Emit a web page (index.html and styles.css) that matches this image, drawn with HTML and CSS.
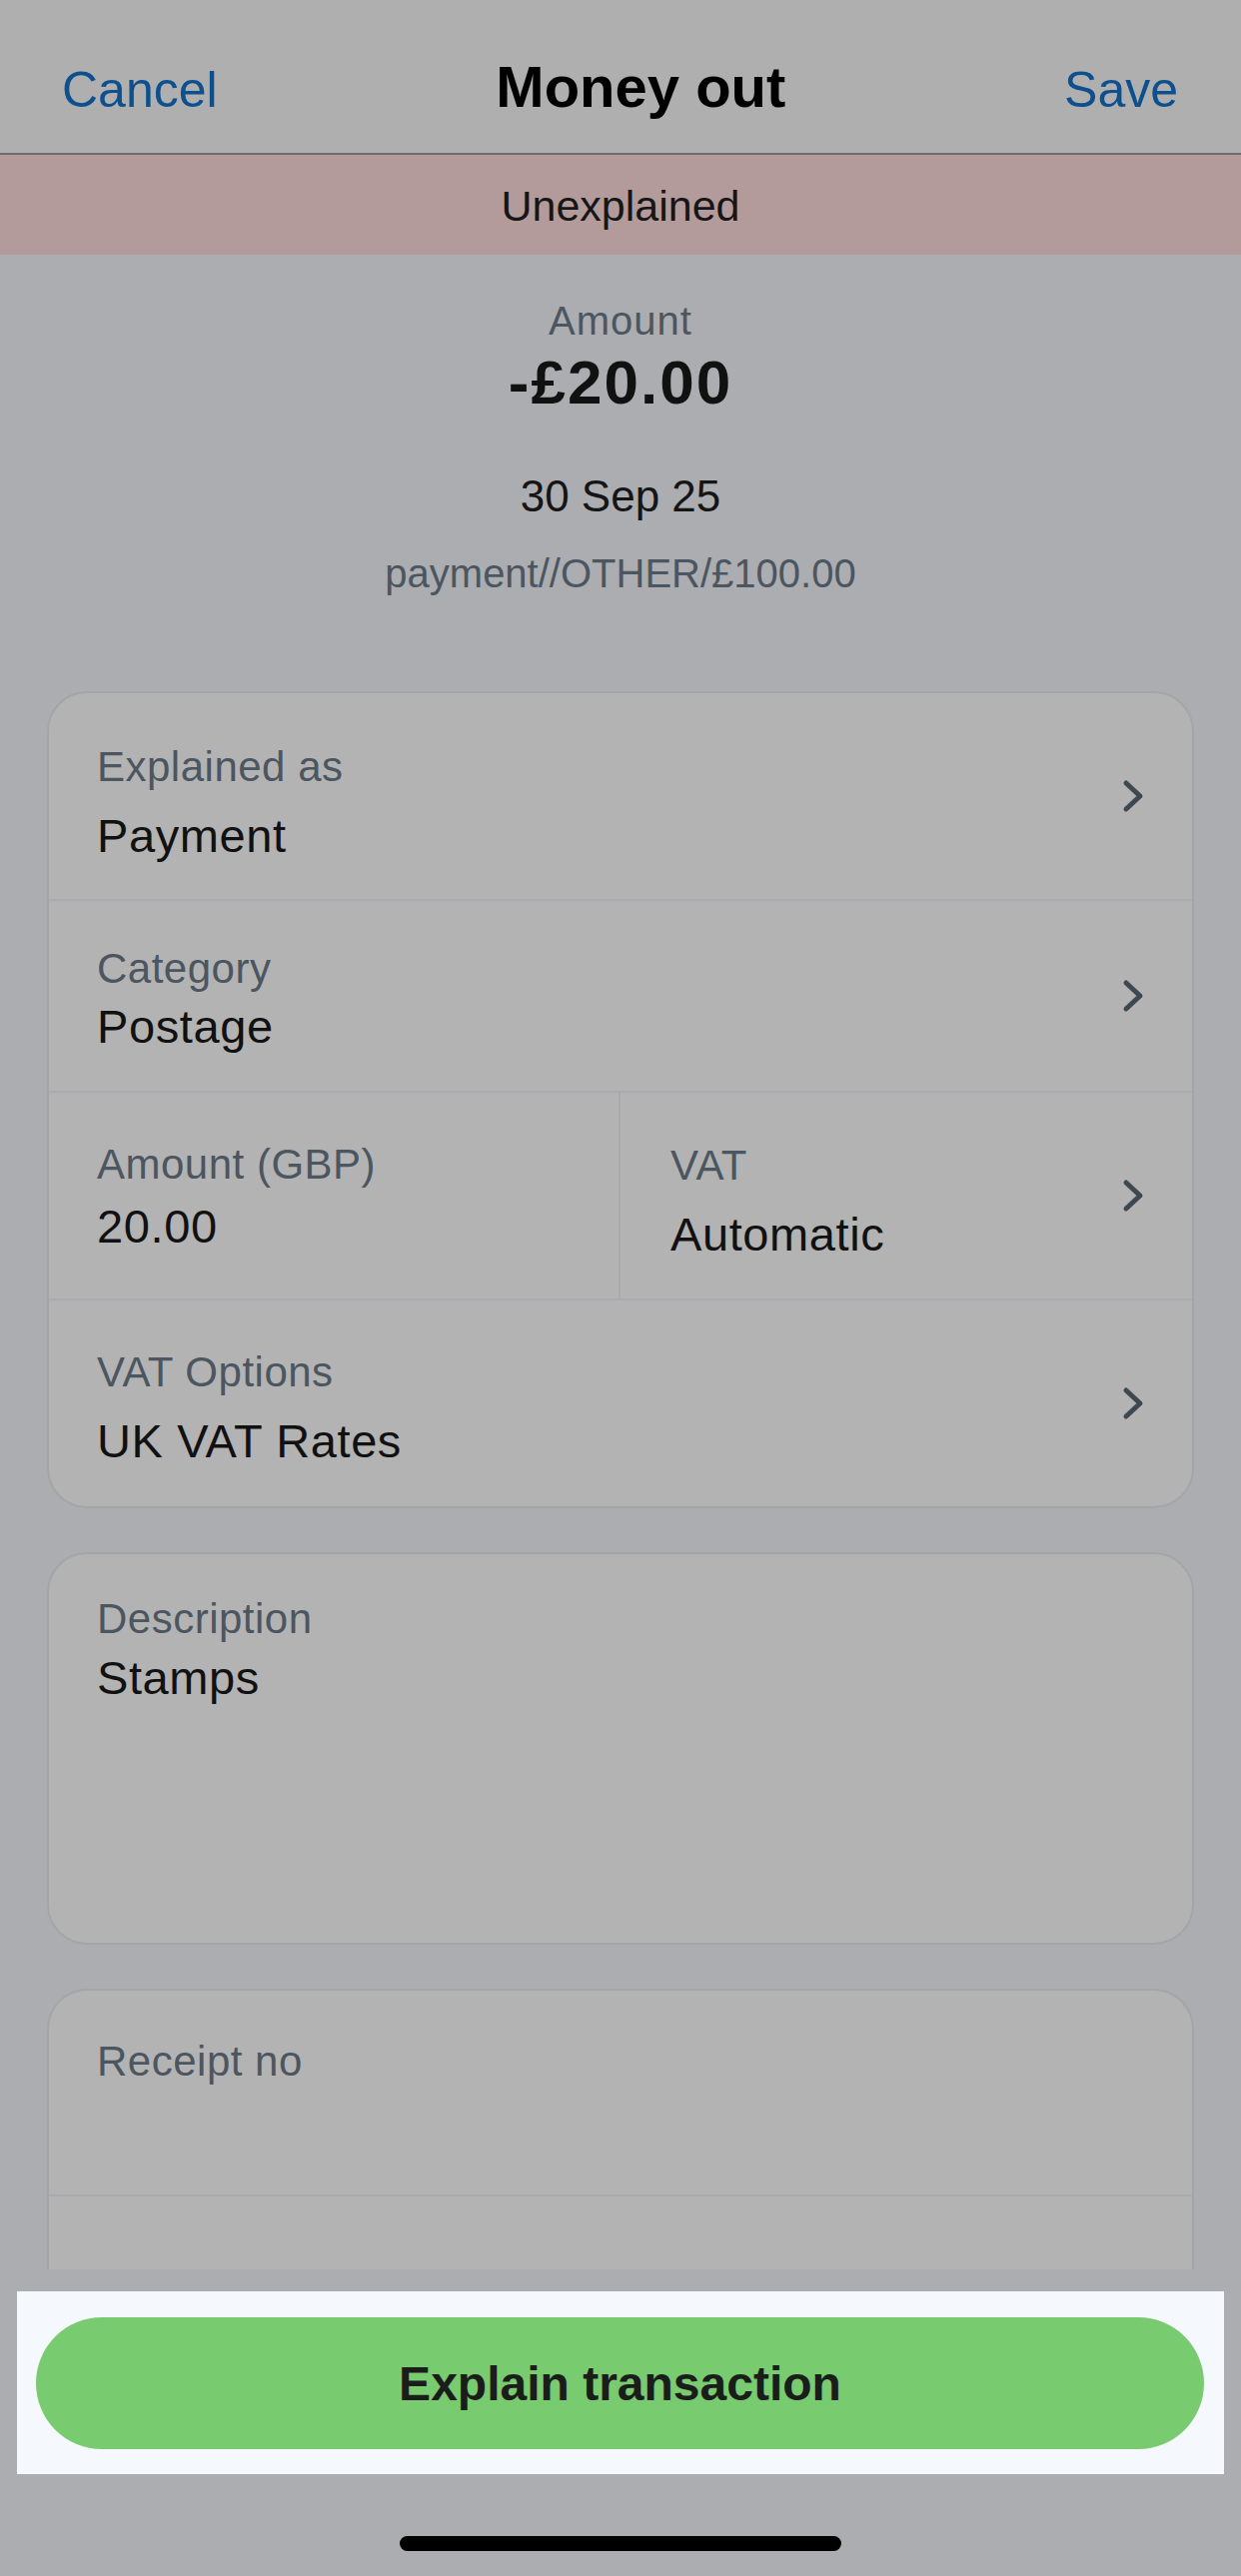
FILE: index.html
```html
<!DOCTYPE html>
<html lang="en">
<head>
    <meta charset="UTF-8">
    <meta name="viewport" content="width=device-width, initial-scale=1.0">
    <title>Money out</title>
    <link rel="stylesheet" href="styles.css">
</head>
<body>
    <div class="screen">
        <div class="content">
            <header class="nav">
                <span class="nav-link">Cancel</span>
                <span class="nav-title">Money out</span>
                <span class="nav-link">Save</span>
            </header>
            <div class="status-banner">Unexplained</div>

            <section class="summary">
                <div class="summary-label">Amount</div>
                <div class="summary-amount">-£20.00</div>
                <div class="summary-date">30 Sep 25</div>
                <div class="summary-ref">payment//OTHER/£100.00</div>
            </section>

            <div class="card">
                <div class="row row-first">
                    <div class="field">
                        <div class="field-label">Explained as</div>
                        <div class="field-value">Payment</div>
                    </div>
                    <svg class="chevron" viewBox="0 0 22 34"><polyline points="4,4 18,17 4,30"/></svg>
                </div>
                <div class="row row-tight">
                    <div class="field">
                        <div class="field-label">Category</div>
                        <div class="field-value">Postage</div>
                    </div>
                    <svg class="chevron" viewBox="0 0 22 34"><polyline points="4,4 18,17 4,30"/></svg>
                </div>
                <div class="row-split">
                    <div class="row row-half row-tight-left">
                        <div class="field">
                            <div class="field-label">Amount (GBP)</div>
                            <div class="field-value">20.00</div>
                        </div>
                    </div>
                    <div class="row row-half row-vat">
                        <div class="field">
                            <div class="field-label">VAT</div>
                            <div class="field-value">Automatic</div>
                        </div>
                        <svg class="chevron" viewBox="0 0 22 34"><polyline points="4,4 18,17 4,30"/></svg>
                    </div>
                </div>
                <div class="row">
                    <div class="field">
                        <div class="field-label">VAT Options</div>
                        <div class="field-value">UK VAT Rates</div>
                    </div>
                    <svg class="chevron" viewBox="0 0 22 34"><polyline points="4,4 18,17 4,30"/></svg>
                </div>
            </div>

            <div class="card card-note">
                <div class="field">
                    <div class="field-label">Description</div>
                    <div class="field-value">Stamps</div>
                </div>
            </div>

            <div class="card card-cut">
                <div class="row row-receipt">
                    <div class="field">
                        <div class="field-label">Receipt no</div>
                    </div>
                </div>
                <div class="row row-empty"></div>
            </div>
        </div>

        <div class="footer">
            <div class="action-panel">
                <button class="primary-btn">Explain transaction</button>
            </div>
            <div class="home-indicator"></div>
        </div>
    </div>
</body>
</html>
```

FILE: styles.css
```css
/* Global Styles */
body {
    margin: 0;
    padding: 0;
    background-color: #acadb1;
    font-family: 'Liberation Sans', Arial, sans-serif;
    height: 2579px;
    overflow: hidden;
}

.screen {
    display: flex;
    flex-direction: column;
    height: 100%;
}

.content {
    height: 2272px;
    overflow: hidden;
}

/* Header */
.nav {
    display: flex;
    justify-content: space-between;
    align-items: baseline;
    height: 155px;
    box-sizing: border-box;
    padding: 57px 63px 0 62px;
    background-color: #afafb0;
    border-bottom: 2px solid #736b6b;
    line-height: 60px;
}

.nav-link {
    font-size: 50px;
    color: #0e4f8e;
}

.nav-title {
    font-size: 58px;
    font-weight: bold;
    color: #000;
}

.status-banner {
    height: 100px;
    line-height: 102px;
    text-align: center;
    background-color: #b39b9b;
    font-size: 43px;
    color: #161616;
}

/* Summary */
.summary {
    padding-top: 42px;
    text-align: center;
}

.summary-label {
    font-size: 40px;
    line-height: 48px;
    color: #4c5660;
    letter-spacing: 1px;
}

.summary-amount {
    margin-top: 3px;
    font-size: 62px;
    line-height: 70px;
    font-weight: bold;
    color: #111;
    letter-spacing: 2px;
}

.summary-date {
    margin-top: 53px;
    font-size: 44px;
    line-height: 52px;
    color: #151515;
}

.summary-ref {
    margin-top: 27px;
    font-size: 40px;
    line-height: 48px;
    color: #4c5660;
}

/* Cards */
.card {
    margin: 94px 47px 0;
    background-color: #b3b3b3;
    border: 2px solid #a4a5a8;
    border-radius: 40px;
    overflow: hidden;
}

.row {
    display: flex;
    align-items: center;
    justify-content: space-between;
    padding: 0 48px;
    border-bottom: 2px solid #a9aaad;
}

.row:last-child {
    border-bottom: none;
}

.field {
    padding: 47px 0 37px;
}

.field-label {
    font-size: 42px;
    line-height: 50px;
    color: #4c5660;
    letter-spacing: 0.5px;
}

.field-value {
    margin-top: 16px;
    font-size: 47px;
    line-height: 56px;
    color: #111;
    letter-spacing: 0.6px;
}

.row-first .field {
    padding: 49px 0 35px;
}

.row-tight .field {
    padding: 43px 0 36px;
}

.row-tight .field-value {
    margin-top: 5px;
}

.row-split {
    display: flex;
    border-bottom: 2px solid #a9aaad;
}

.row-half {
    flex: 1;
    border-bottom: none;
}

.row-half + .row-half {
    border-left: 2px solid #a9aaad;
    padding-left: 50px;
}

.row-tight-left {
    align-items: flex-start;
}

.row-tight-left .field-value {
    margin-top: 9px;
}

.row-vat .field {
    padding: 48px 0 36px;
}

.chevron {
    width: 22px;
    height: 34px;
    flex-shrink: 0;
    fill: none;
    stroke: #3d4850;
    stroke-width: 5;
    stroke-linecap: round;
    stroke-linejoin: round;
}

.card-note {
    margin-top: 44px;
    height: 393px;
    box-sizing: border-box;
    padding: 0 48px;
}

.card-note .field {
    padding-top: 40px;
}

.card-note .field-value {
    margin-top: 6px;
}

.card-cut {
    margin-top: 44px;
    border-bottom: none;
    border-radius: 40px 40px 0 0;
}

.row-receipt {
    height: 206px;
    box-sizing: border-box;
    align-items: flex-start;
}

.row-receipt .field {
    padding-top: 46px;
}

.row-empty {
    height: 120px;
}

/* Footer */
.footer {
    padding-top: 22px;
}

.action-panel {
    margin: 0 17px;
    padding: 26px 20px 25px 19px;
    background-color: #f5f8fd;
}

.primary-btn {
    display: block;
    width: 100%;
    height: 132px;
    border: none;
    border-radius: 66px;
    background-color: #79cb6f;
    color: #1b1d1b;
    font-family: 'Liberation Sans', Arial, sans-serif;
    font-size: 48px;
    font-weight: bold;
}

.home-indicator {
    width: 442px;
    height: 15px;
    margin: 62px auto 0;
    border-radius: 8px;
    background-color: #000;
}
```
